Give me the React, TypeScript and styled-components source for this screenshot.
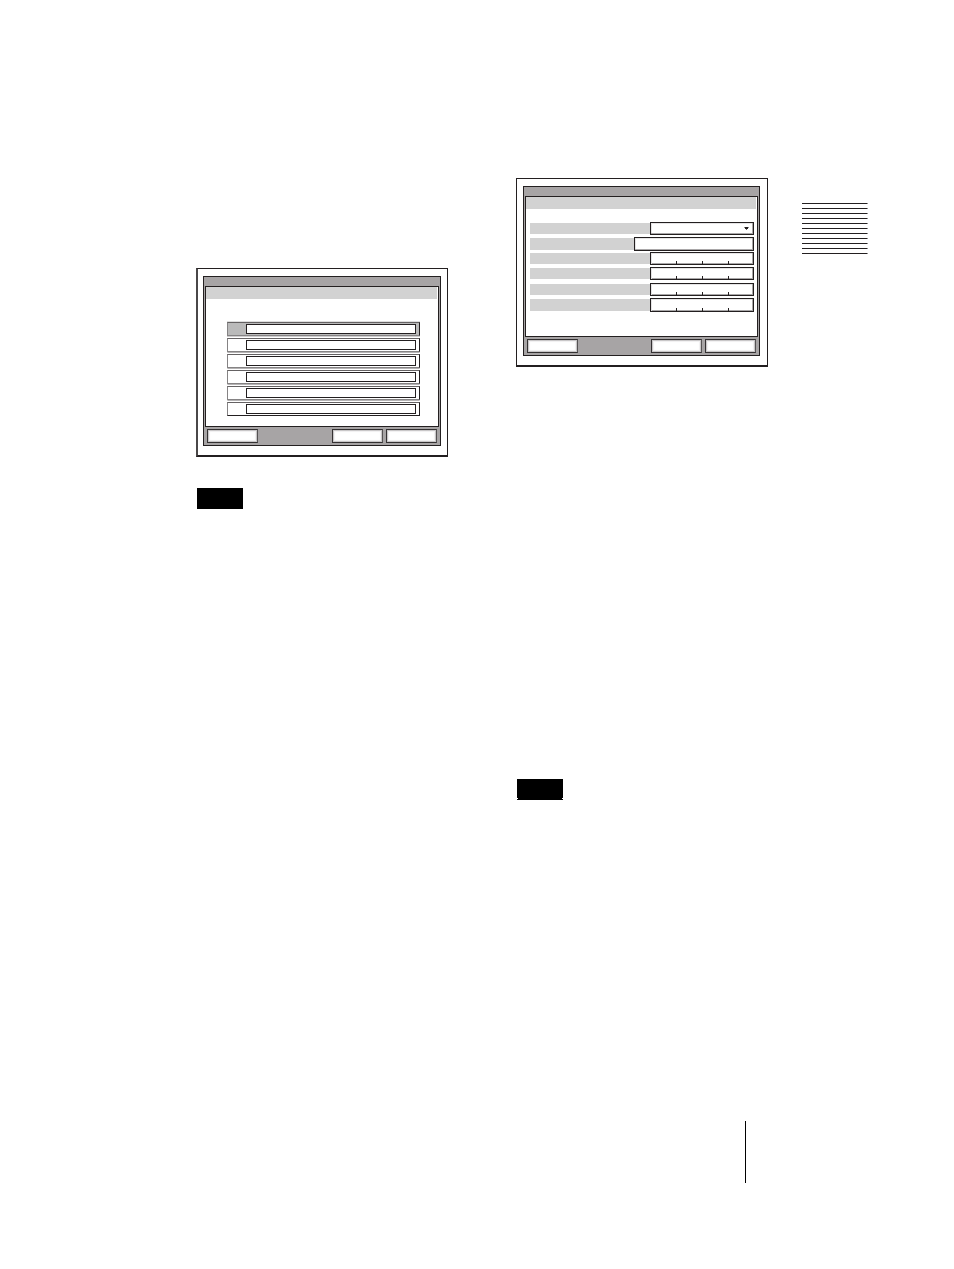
import React from "react";
import styled, { createGlobalStyle, css } from "styled-components";

const ink = "#231f20";
const steel = "#a7a4a5";
const silver = "#d2d2d2";

const GlobalStyle = createGlobalStyle`
  *, *::before, *::after { box-sizing: border-box; }
  body {
    margin: 0;
    background: #fff;
    font-family: "Liberation Sans", sans-serif;
    font-size: 8px;
  }
  button, input, select { font: inherit; color: ${ink}; margin: 0; border-radius: 0; }
`;

const Page = styled.div`
  padding-bottom: 86px;
`;

const Spread = styled.main`
  display: grid;
  grid-template-columns:
    minmax(0, 196fr) minmax(0, 252fr) minmax(0, 68fr) minmax(0, 252fr)
    minmax(0, 34fr) minmax(0, 66fr) minmax(0, 86fr);
  align-items: start;
  padding-top: 178px;
`;

const Column = styled.section<{ $track: number; $top?: number }>`
  grid-column: ${(p) => p.$track};
  grid-row: 1;
  padding-top: ${(p) => p.$top ?? 0}px;
`;

const Figure = styled.div<{ $heavyLeft?: boolean }>`
  padding: 7px 7px 9px 6px;
  border: 1px solid ${ink};
  border-bottom-width: 2px;
  ${(p) =>
    p.$heavyLeft &&
    css`
      padding: 7px 6px 9px 5px;
      border-left: 2px solid #4a4748;
    `}
`;

const Device = styled.form`
  padding: 9px 1px 2px;
  border: 1px solid ${ink};
  background: ${steel};
`;

const Screen = styled.div`
  height: 141px;
  border: 1px solid ${ink};
  background: #fff;
`;

const TitleBar = styled.div`
  height: 12px;
  margin-right: 1px;
  background: ${silver};
`;

const Actions = styled.div`
  display: flex;
  gap: 3px;
  padding: 2px 2px 0;
`;

const ActionButton = styled.button`
  width: 51px;
  height: 14px;
  padding: 0;
  border: 1px solid #343132;
  border-right-color: #555253;
  background: #fff;
  box-shadow: inset 0 0 0 1px #c9c7c8, inset 0 0 1px 2px #f1f0f1;

  &:first-child { margin-right: auto; }
`;

const SlotList = styled.ul`
  display: flex;
  flex-direction: column;
  gap: 2px;
  margin: 23px 18px 0 21px;
  padding: 0;
  list-style: none;
`;

const Slot = styled.li<{ $selected?: boolean }>`
  display: flex;
  height: 14px;
  padding: 1px 3px 1px 18px;
  border: 1px solid ${ink};
  border-top-color: #656263;
  border-bottom-color: #858384;
  border-left-color: #858384;
  background: ${(p) => (p.$selected ? "#bababa" : "#fff")};
  box-shadow: 0 2px 0 -1px #b5b3b4, 0 1px 0 #cfcdce;

  &:first-child { box-shadow: 0 -1px 0 #dedede, 0 1px 0 #cfcdce; }
  &:last-child {
    border-bottom-color: ${ink};
    box-shadow: none;
  }
`;

const SlotInput = styled.input`
  flex: 1;
  min-width: 0;
  height: 10px;
  padding: 0 2px;
  border: 1px solid ${ink};
  background: #fff;
`;

const FieldGroup = styled.div<{ $first?: boolean }>`
  display: grid;
  grid-auto-rows: 15px;
  margin: ${(p) => (p.$first ? 13 : 1)}px 3px 0 4px;
`;

const FieldRow = styled.div<{ $wide?: boolean }>`
  display: grid;
  grid-template-columns: minmax(0, 1fr) ${(p) => (p.$wide ? 120 : 104)}px;
  align-items: start;
`;

const FieldLabel = styled.label<{ $tall?: boolean }>`
  height: ${(p) => (p.$tall ? 12 : 11)}px;
  margin-top: 1px;
  background: ${silver};
`;

const fieldBox = css`
  width: 100%;
  padding: 0 3px;
  border: 1px solid ${ink};
  background-color: #fff;
  box-shadow: inset -1px -1px 0 #a9a7a8, inset 1px 1px 0 #e6e5e6;
`;

const tick = `linear-gradient(${ink}, ${ink})`;

const FieldInput = styled.input<{ $tall?: boolean; $segmented?: boolean }>`
  ${fieldBox}
  height: ${(p) => (p.$tall ? 14 : 13)}px;
  ${(p) =>
    p.$segmented &&
    css`
      box-shadow: inset -1px 0 0 #a9a7a8, inset 1px 1px 0 #e6e5e6;
      background-image: ${tick}, ${tick}, ${tick}, linear-gradient(#a9a7a8, #a9a7a8);
      background-repeat: no-repeat;
      background-size: 1px 3px, 1px 3px, 1px 3px, 100% 1px;
      background-position: 25% 100%, 50% 100%, 76% 100%, 0 100%;
    `}
`;

const SelectWrap = styled.div`
  position: relative;
  height: 13px;
`;

const FieldSelect = styled.select`
  ${fieldBox}
  display: block;
  height: 13px;
  appearance: none;
`;

const Arrow = styled.svg`
  position: absolute;
  top: 5px;
  right: 5px;
  pointer-events: none;
`;

const NoteTag = styled.div<{ $top: number }>`
  width: 46px;
  height: 21px;
  margin: ${(p) => p.$top}px 0 0 1px;
  background: #000;
`;

const NotchedTag = styled(NoteTag)`
  display: flex;
  justify-content: space-between;
  align-items: flex-end;
  padding-bottom: 1px;

  &::before,
  &::after {
    content: "";
    width: 1px;
    height: 1px;
    background: #fff;
  }
`;

const ThumbIndex = styled.aside`
  grid-column: 6;
  grid-row: 1;
  display: grid;
  gap: 4px;
  padding-top: 25px;
`;

const ThumbLine = styled.div`
  height: 1px;
  border-right: 1px solid #8a8889;
  background: ${ink};
`;

const Footer = styled.footer`
  display: grid;
  grid-template-columns: 745fr 209fr;
  padding-top: 321px;
`;

const FolioRule = styled.div`
  grid-column: 2;
  height: 62px;
  border-left: 1px solid #000;
`;

function ActionBar() {
  return (
    <Actions>
      <ActionButton type="button" aria-label="Cancel" />
      <ActionButton type="button" aria-label="Previous" />
      <ActionButton type="button" aria-label="Next" />
    </Actions>
  );
}

interface Field {
  id: string;
  name: string;
  kind: "select" | "text" | "segmented";
  tall?: boolean;
}

const fieldGroups: Field[][] = [
  [
    { id: "mode", name: "Mode", kind: "select" },
    { id: "name", name: "Name", kind: "text", tall: true },
    { id: "address", name: "Address", kind: "segmented" },
    { id: "mask", name: "Mask", kind: "segmented" },
  ],
  [
    { id: "gateway", name: "Gateway", kind: "segmented" },
    { id: "server", name: "Server", kind: "segmented", tall: true },
  ],
];

function FieldControl({ field }: { field: Field }) {
  if (field.kind === "select") {
    return (
      <SelectWrap>
        <FieldSelect id={field.id} aria-label={field.name}>
          <option value="" />
        </FieldSelect>
        <Arrow width="5" height="4" viewBox="0 0 5 4" aria-hidden="true">
          <path d="M0 0h5v1H0z" fill="#8a8889" />
          <path d="M1 0h3v2H1z" fill={ink} />
          <path d="M2 2h1v1H2z" fill="#656263" />
        </Arrow>
      </SelectWrap>
    );
  }
  return (
    <FieldInput
      id={field.id}
      type="text"
      aria-label={field.name}
      $tall={field.tall}
      $segmented={field.kind === "segmented"}
    />
  );
}

export default function App() {
  return (
    <>
      <GlobalStyle />
      <Page>
        <Spread>
          <Column $track={2} $top={90}>
            <Figure $heavyLeft>
              <Device>
                <Screen>
                  <TitleBar />
                  <SlotList>
                    {[1, 2, 3, 4, 5, 6].map((n) => (
                      <Slot key={n} $selected={n === 1}>
                        <SlotInput type="text" aria-label={`Entry ${n}`} />
                      </Slot>
                    ))}
                  </SlotList>
                </Screen>
                <ActionBar />
              </Device>
            </Figure>
            <NoteTag $top={31} />
          </Column>

          <Column $track={4}>
            <Figure>
              <Device>
                <Screen>
                  <TitleBar />
                  {fieldGroups.map((group, i) => (
                    <FieldGroup key={i} $first={i === 0}>
                      {group.map((field) => (
                        <FieldRow key={field.id} $wide={field.kind === "text"}>
                          <FieldLabel htmlFor={field.id} $tall={field.tall} />
                          <FieldControl field={field} />
                        </FieldRow>
                      ))}
                    </FieldGroup>
                  ))}
                </Screen>
                <ActionBar />
              </Device>
            </Figure>
            <NotchedTag $top={412} />
          </Column>

          <ThumbIndex>
            {Array.from({ length: 11 }, (_, i) => (
              <ThumbLine key={i} />
            ))}
          </ThumbIndex>
        </Spread>
        <Footer>
          <FolioRule />
        </Footer>
      </Page>
    </>
  );
}
